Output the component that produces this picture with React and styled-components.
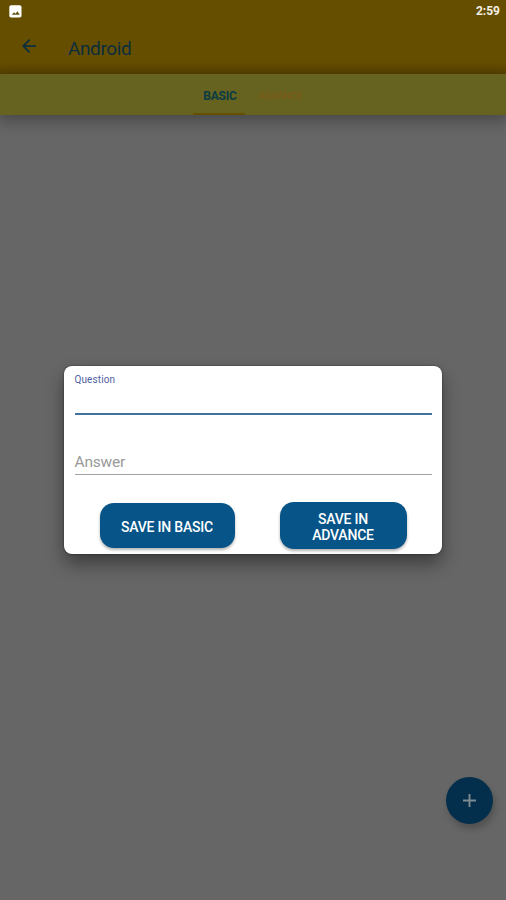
import React from "react";
import styled, { createGlobalStyle } from "styled-components";

const App = () => {
  return (
    <>
      <GlobalStyle />
      <Screen>
        <Header>
          <StatusBar>
            <svg width="13" height="13" viewBox="0 0 13 13">
              <rect x="0.3" y="0.3" width="12.2" height="12.2" rx="1.8" fill="#fff" />
              <path d="M2.8 9.8 5 7.2l1.5 1.6L8.4 6.3l2.4 3.5z" fill="#665210" />
            </svg>
            <Clock>2:59</Clock>
          </StatusBar>
          <Toolbar>
            <BackIcon viewBox="4 4 16 16">
              <path
                d="M20 11H7.83l5.59-5.59L12 4l-8 8 8 8 1.41-1.41L7.83 13H20v-2z"
                fill="#0b2f3d"
              />
            </BackIcon>
            <Title>Android</Title>
          </Toolbar>
        </Header>
        <Tabs>
          <Tab $active>BASIC</Tab>
          <Tab>ADVANCE</Tab>
        </Tabs>
        <Content>
          <Fab>
            <svg width="13" height="13" viewBox="0 0 13 13">
              <path d="M6.5 0v13M0 6.5h13" stroke="#7d8a91" strokeWidth="1.9" />
            </svg>
          </Fab>
        </Content>
        <Overlay>
          <Dialog>
            <Field $active>
              <Label $active>Question</Label>
            </Field>
            <Field>
              <Label>Answer</Label>
            </Field>
            <Actions>
              <SaveButton>SAVE IN BASIC</SaveButton>
              <SaveButton $tall>
                SAVE IN
                <br />
                ADVANCE
              </SaveButton>
            </Actions>
          </Dialog>
        </Overlay>
      </Screen>
    </>
  );
};

const GlobalStyle = createGlobalStyle`
  * {
    box-sizing: border-box;
  }
  body {
    margin: 0;
    font-family: Roboto, sans-serif;
  }
`;
const Screen = styled.div`
  position: relative;
  display: flex;
  flex-direction: column;
  width: 506px;
  height: 900px;
  overflow: hidden;
  background: #666;
`;
const Header = styled.header`
  height: 74px;
  background: linear-gradient(#664e00 62px, #5a4300 74px);
`;
const StatusBar = styled.div`
  display: flex;
  justify-content: space-between;
  align-items: center;
  height: 22px;
  padding: 0 6px 0 9px;
`;
const Clock = styled.span`
  font-size: 12px;
  font-weight: 700;
  line-height: 22px;
  color: #f4eee2;
`;
const Toolbar = styled.div`
  display: flex;
  align-items: center;
  height: 52px;
  padding: 0 0 0 22px;
`;
const BackIcon = styled.svg`
  width: 14px;
  height: 14px;
  margin-bottom: 5px;
`;
const Title = styled.h1`
  margin: 1px 0 0 32px;
  font-size: 19px;
  font-weight: 400;
  line-height: 24px;
  letter-spacing: -0.4px;
  color: #0b2f3d;
`;
const Tabs = styled.nav`
  display: flex;
  justify-content: center;
  height: 41px;
  background: #66621f;
  box-shadow: 0 4px 16px 2px rgba(0, 0, 0, 0.3);
`;
const Tab = styled.div`
  display: flex;
  align-items: center;
  justify-content: center;
  width: ${({ $active }) => ($active ? "52px" : "68px")};
  padding: ${({ $active }) => ($active ? "5px 0 0 2px" : "4px 0 0 3px")};
  border-bottom: ${({ $active }) =>
    $active ? "2px solid #665000" : "2px solid transparent"};
  font-size: ${({ $active }) => ($active ? "12px" : "9.8px")};
  font-weight: ${({ $active }) => ($active ? 700 : 400)};
  letter-spacing: ${({ $active }) => ($active ? "-0.2px" : "0")};
  color: ${({ $active }) => ($active ? "#093c43" : "#825a14")};
`;
const Content = styled.main`
  display: flex;
  flex: 1;
  justify-content: flex-end;
  align-items: flex-end;
  padding: 0 13px 76px;
`;
const Fab = styled.button`
  display: flex;
  align-items: center;
  justify-content: center;
  width: 47px;
  height: 47px;
  padding: 0;
  border: 0;
  border-radius: 50%;
  background: #032f4c;
  box-shadow: 2px 5px 7px rgba(0, 0, 0, 0.22);
`;
const Overlay = styled.div`
  position: absolute;
  inset: 0;
  display: flex;
  justify-content: center;
  align-items: center;
  padding-top: 20px;
`;
const Dialog = styled.div`
  width: 378px;
  height: 188px;
  padding: 0 10.5px;
  border-radius: 8px;
  background: #fff;
  box-shadow: 0 0 2px rgba(0, 0, 0, 0.6), 0 10px 18px rgba(0, 0, 0, 0.4);
`;
const Field = styled.div`
  display: flex;
  align-items: ${({ $active }) => ($active ? "flex-start" : "flex-end")};
  height: ${({ $active }) => ($active ? "49px" : "60px")};
  padding: ${({ $active }) => ($active ? "7px 0 0" : "0 0 2px")};
  border-bottom: ${({ $active }) =>
    $active ? "2px solid #42739e" : "1px solid #a2a2a2"};
`;
const Label = styled.label`
  font-size: ${({ $active }) => ($active ? "10px" : "15.5px")};
  line-height: ${({ $active }) => ($active ? "13px" : "20px")};
  letter-spacing: ${({ $active }) => ($active ? "0.1px" : "-0.2px")};
  color: ${({ $active }) => ($active ? "#5062a0" : "#999")};
`;
const Actions = styled.div`
  display: flex;
  justify-content: space-between;
  align-items: center;
  height: 47px;
  margin: 27px 25px 0;
`;
const SaveButton = styled.button`
  width: ${({ $tall }) => ($tall ? "127px" : "135px")};
  height: ${({ $tall }) => ($tall ? "47px" : "45px")};
  padding: 2px 0 0;
  border: 0;
  border-radius: 14px;
  background: #065488;
  box-shadow: 0 2px 3px rgba(0, 0, 0, 0.3);
  font-family: inherit;
  font-size: 14px;
  font-weight: 500;
  line-height: 16px;
  letter-spacing: -0.2px;
  color: #fff;
`;

export default App;
